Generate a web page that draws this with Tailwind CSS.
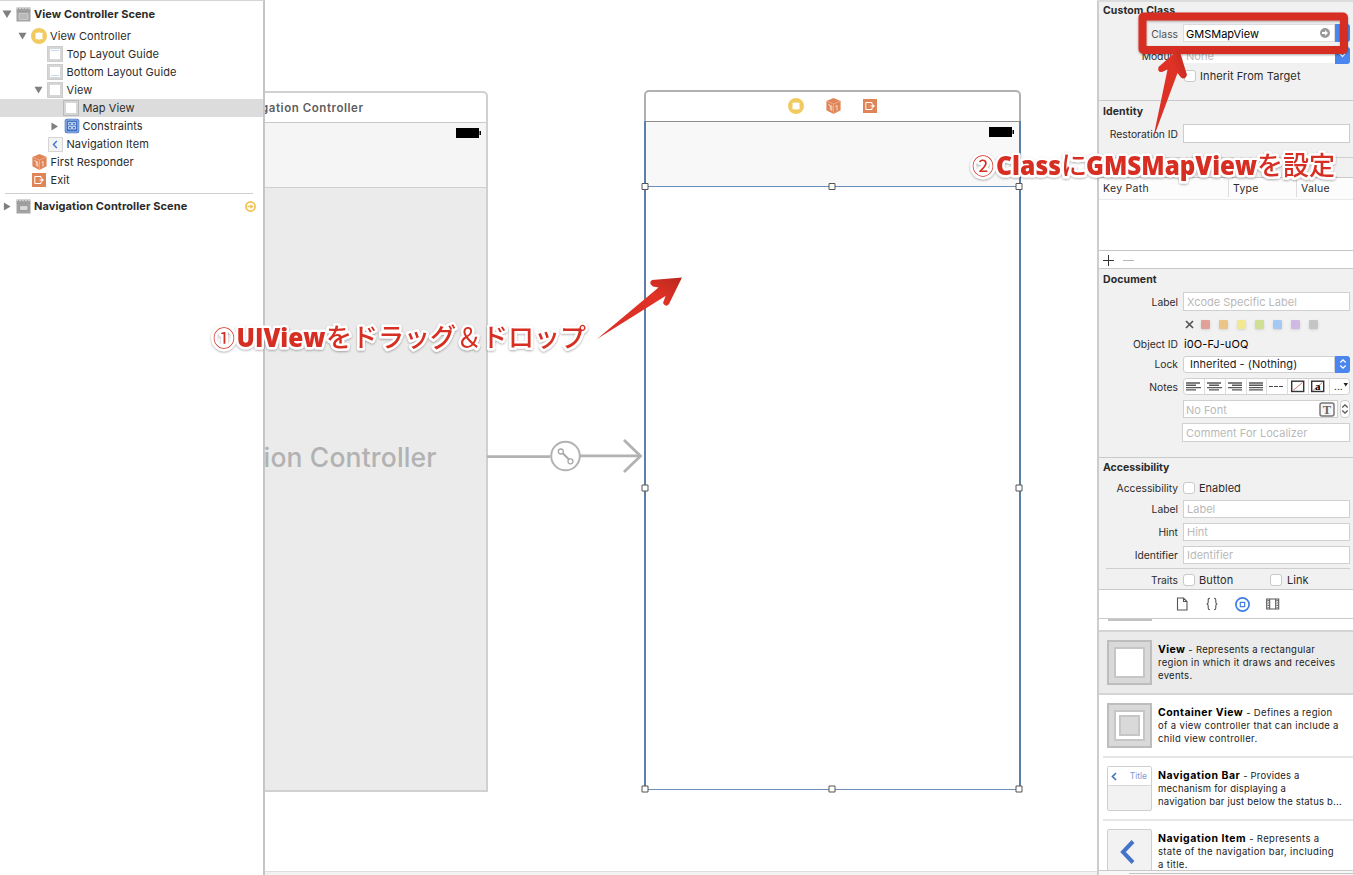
<!DOCTYPE html>
<html lang="ja">
<head>
<meta charset="utf-8">
<title>Interface Builder</title>
<script src="https://cdn.jsdelivr.net/npm/@tailwindcss/browser@4"></script>
</head>
<body class="relative flex h-[875px] w-[1353px] overflow-hidden bg-white font-['Inter','Noto_Sans_CJK_JP',sans-serif] text-[11px] text-[#2b2b2b]">
<svg class="hidden">
  <symbol id="down" viewBox="0 0 10 8"><path d="M0.5 0.5h9L5 8z" fill="#808080"/></symbol>
  <symbol id="right" viewBox="0 0 8 10"><path d="M0.5 0.5v9L8 5z" fill="#808080"/></symbol>
  <symbol id="vc" viewBox="0 0 16 16"><circle cx="8" cy="8" r="8" fill="#f2cb60"/><path d="M4.500 4.500l1.300.6 1.100-.6h2.200l1.100.6 1.300-.6v7l-1.300-.6-1.100.6H6.900l-1.100-.6-1.300.6z" fill="#fff"/></symbol>
  <symbol id="cube" viewBox="0 0 15 16"><path d="M7.500 0L14.600 3v9.300L7.500 16 .4 12.300V3z" fill="#e08558"/><path d="M.8 3.200L7.500 6l6.700-2.800M7.500 6v9.500" fill="none" stroke="#efb398" stroke-width=".8"/><path d="M2.300 6.500l2 .9v4.500M4.500 7.500l1.300.6v4.800M9.500 8.500l1.500-1v5" fill="none" stroke="#fbe5da" stroke-width=".9"/></symbol>
  <symbol id="exit" viewBox="0 0 14 14"><path d="M0 0h14v14H0z" fill="#e08558"/><path d="M9 5.200V3.500H2.800v7H9V8.800" fill="none" stroke="#fff" stroke-width="1"/><path d="M7.500 7H10" stroke="#fff"/><path d="M9.300 4.800L12 7 9.300 9.200z" fill="#fff"/></symbol>
  <symbol id="clap" viewBox="0 0 15 15"><path d="M.5.5h14v14H.5z" fill="#a3a3a3"/><path d="M1 2l1.500-1.500L4 2l1.500-1.500L7 2 8.500.5 10 2 11.500.5 13 2 14.300.5" fill="none" stroke="#ddd" stroke-width=".8"/><path d="M.5 4.200h14" stroke="#8d8d8d" stroke-width=".6"/></symbol>
  <symbol id="box" viewBox="0 0 16 16"><path d="M0 0h16v16H0z" fill="#d6d6d6"/><path d="M.5.5h15v15H.5z" fill="none" stroke="#cdcdcd"/><path d="M3 3h10v10H3z" fill="#fff"/></symbol>
  <symbol id="updown" viewBox="0 0 8 12"><path d="M1.300 4.500L4 1.800l2.700 2.700M1.300 7.500L4 10.200l2.700-2.700" fill="none" stroke="currentColor" stroke-width="1.300"/></symbol>
</svg>

<!-- Document outline -->
<aside class="flex h-full w-[265px] shrink-0 flex-col border-t border-r-2 border-t-[#d5d5d5] border-r-[#c6c6c6] text-[11px] tracking-[0.08px] whitespace-nowrap">
  <div class="mt-[4px] flex h-[18px] items-center pl-[2px] font-bold tracking-[0.08px]"><svg class="h-[8px] w-[10px]"><use href="#down"/></svg><span class="ml-[4px] size-[15px]"><svg class="size-[15px]"><use href="#clap"/><path d="M3 6.500h9v6H3z" fill="#b9b9b9" stroke="#d5d5d5" stroke-width=".7"/></svg></span><span class="ml-[3px]">View Controller Scene</span></div>
  <div class="mt-[4px] flex h-[18px] items-center pl-[18px]"><svg class="h-[8px] w-[9px]"><use href="#down"/></svg><svg class="ml-[4px] size-[16px]"><use href="#vc"/></svg><span class="ml-[3px]">View Controller</span></div>
  <div class="flex h-[18px] items-center pl-[47px]"><svg class="size-[16px]"><use href="#box"/><path d="M4 4.500h8" stroke="#c3daf6"/></svg><span class="ml-[3.500px]">Top Layout Guide</span></div>
  <div class="flex h-[18px] items-center pl-[47px]"><svg class="size-[16px]"><use href="#box"/><path d="M4 11.500h8" stroke="#c3daf6"/></svg><span class="ml-[3.500px]">Bottom Layout Guide</span></div>
  <div class="flex h-[18px] items-center pl-[34px]"><svg class="h-[8px] w-[9px]"><use href="#down"/></svg><svg class="ml-[4px] size-[16px]"><use href="#box"/></svg><span class="ml-[3.500px]">View</span></div>
  <div class="flex h-[18px] items-center bg-[#dcdcdc] pl-[63px]"><svg class="size-[16px]"><use href="#box"/><path d="M.5.5h15v15H.5z" fill="none" stroke="#b9b9b9"/></svg><span class="ml-[3.500px]">Map View</span></div>
  <div class="flex h-[18px] items-center pl-[51px]"><svg class="h-[9px] w-[7px]"><use href="#right"/></svg><svg class="ml-[6px] size-[16px]" viewBox="0 0 16 16"><rect x=".7" y=".7" width="14.600" height="14.600" rx="2.500" fill="#4474c4"/><rect x="2" y="2" width="12" height="12" rx="1.500" fill="#4474c4" stroke="#b4caee" stroke-width=".9"/><path d="M4.500 4.500h3v2.500h-3zM8.500 4.500h3v2.500h-3zM4.500 8.500h3v2.500h-3zM8.500 8.500h3v2.500h-3z" fill="none" stroke="#d9e5f8" stroke-width=".8"/></svg><span class="ml-[2.500px]">Constraints</span></div>
  <div class="flex h-[18px] items-center pl-[48px]"><svg class="size-[15px]" viewBox="0 0 15 15"><path d="M.5.500h14v14H.5z" fill="#f3f3f3" stroke="#d4d4d4"/><path d="M8.800 4L5.500 7.500 8.800 11" fill="none" stroke="#3f74d1" stroke-width="1.400"/></svg><span class="ml-[3.500px]">Navigation Item</span></div>
  <div class="flex h-[18px] items-center pl-[32px]"><svg class="h-[16px] w-[15px]"><use href="#cube"/></svg><span class="ml-[3.500px]">First Responder</span></div>
  <div class="flex h-[18px] items-center pl-[32px]"><svg class="size-[14px]"><use href="#exit"/></svg><span class="ml-[4.500px]">Exit</span></div>
  <div class="mt-[4px] mr-[10px] ml-[5px] h-px bg-[#cfcfcf]"></div>
  <div class="mt-[3px] flex h-[18px] items-center pl-[3px] font-bold tracking-[0.1px]"><svg class="h-[9px] w-[8px]"><use href="#right"/></svg><svg class="ml-[5px] size-[15px]"><use href="#clap"/><rect x="3.500" y="6.500" width="8.500" height="5" rx="1.500" fill="#d8d8d8" stroke="#8c8c8c" stroke-width=".7"/></svg><span class="ml-[3px]">Navigation Controller Scene</span><svg class="mr-[7px] ml-auto size-[11px]" viewBox="0 0 11 11"><circle cx="5.500" cy="5.500" r="4.600" fill="#fff" stroke="#efc34e" stroke-width="1.700"/><path d="M2.500 4.700h3V3L8.500 5.500 5.500 8V6.300h-3z" fill="#efc34e"/></svg></div>
</aside>

<!-- Storyboard canvas: freely placed scenes -->
<main class="relative h-full w-[832px] shrink-0 overflow-hidden bg-white">
  <div class="absolute top-[91px] left-[-160px] h-[701px] w-[383px] rounded-t-[5px] border-2 border-[#d0d0d0] bg-[#ebebeb]">
    <div class="h-[30px] rounded-t-[4px] border-b border-[#c9c9c9] bg-white"></div>
    <div class="flex h-[65px] justify-end border-b border-[#cfcfcf] bg-[#f5f5f5] pt-[5px] pr-[5px]"><svg class="h-[10px] w-[25px]"><path d="M0 0h23v10H0zM23.500 3h1.500v4h-1.500z"/></svg></div>
  </div>
  <svg class="absolute top-0 left-0 h-[875px] w-[832px]" viewBox="265 0 832 875" font-family="Inter, sans-serif">
    <text x="363" y="112" text-anchor="end" font-size="11.500" font-weight="600" fill="#5d5d5d" textLength="129">Navigation Controller</text>
    <text x="436.500" y="466.500" text-anchor="end" font-size="26.500" font-weight="500" fill="#b2b2b2" textLength="271">Navigation Controller</text>
    <path d="M487 456.700H550M580 455.800H640" stroke="#b2b2b2" stroke-width="2.700"/>
    <path d="M624 440l16.500 16L624 472" fill="none" stroke="#b2b2b2" stroke-width="2.800"/>
    <circle cx="565.500" cy="456" r="14.300" fill="#fff" stroke="#b2b2b2" stroke-width="2"/>
    <path d="M562.500 453l6.500 6.500" stroke="#a8a8a8" stroke-width="2"/>
    <g fill="#fff" stroke="#a8a8a8" stroke-width="1.300"><circle cx="560.800" cy="451.500" r="2.500"/><circle cx="570.500" cy="461.300" r="2.500"/></g>
  </svg>
  <div class="absolute top-[90px] left-[379px] h-[40px] w-[377px] rounded-t-[5px] border-2 border-[#b0b0b0] bg-white"></div>
  <div class="absolute top-[121px] left-[379px] h-[669px] w-[377px] border-x-2 border-t border-b border-x-[#5c7fa8] border-t-[#8c8c8c] border-b-[#6d8fb8] bg-white">
    <div class="flex h-[65px] justify-end border-b border-[#6b8fbb] bg-[#f8f8f8] pt-[5px] pr-[5px]"><svg class="h-[10px] w-[25px]"><path d="M0 0h23v10H0zM23.500 3h1.500v4h-1.500z"/></svg></div>
  </div>
  <div class="absolute top-[98px] left-[523px] flex items-center gap-[22px]"><svg class="size-[16px]"><use href="#vc"/></svg><svg class="h-[16px] w-[15px]"><use href="#cube"/></svg><svg class="size-[14px]"><use href="#exit"/></svg></div>
  <svg class="absolute top-0 left-0 h-[875px] w-[832px]" viewBox="265 0 832 875" fill="#fff" stroke="#555" stroke-width="1">
    <path d="M642 183.500h6v6h-6zM829 183.500h6v6h-6zM1016 183.500h6v6h-6zM642 485h6v6h-6zM1016 485h6v6h-6zM642 786h6v6h-6zM829 786h6v6h-6zM1016 786h6v6h-6z"/>
  </svg>
  <div class="absolute inset-x-0 bottom-0 h-[4px] border-t border-[#dedede] bg-[#f2f2f2]"></div>
</main>

<!-- Inspector -->
<aside class="flex h-full w-[256px] shrink-0 flex-col border-t-2 border-l-2 border-t-[#dcdcdc] border-l-[#cdcdcd] bg-[#f1f1f1] text-[10.300px] whitespace-nowrap">
  <section class="h-[99px] border-b border-[#c9c9c9]">
    <h2 class="flex h-[18px] items-center pl-[4px] text-[10.500px] font-bold tracking-[0.1px]">Custom Class</h2>
    <div class="mt-[4px] flex h-[18px] items-center"><span class="w-[79px] pt-[4px] text-right text-[#505050]">Class</span><div class="ml-[5px] flex h-[18px] w-[152px] items-center border border-[#ddd] bg-white pr-[4px] pl-[2px] text-[11px] text-black"><span class="pt-[2px]">GMSMapView</span><svg class="ml-auto size-[10px]" viewBox="0 0 10 10"><circle cx="5" cy="5" r="5" fill="#9a9a9a"/><path d="M2 4h3V2.300L8 5 5 7.700V6H2z" fill="#fff"/></svg></div><div class="h-[18px] w-[15px] rounded-r-[3px] bg-[#4a86ee]"></div></div>
    <div class="mt-[4px] flex h-[18px] items-center"><span class="w-[79px] pt-[4px] text-right">Module</span><div class="ml-[5px] flex h-[15px] w-[152px] items-center bg-white pt-[2px] pl-[3px] text-[11px] text-[#b9b9b9]">None</div><div class="flex h-[17px] w-[15px] items-center justify-center rounded-r-[3px] bg-[#4a86ee]"><svg class="size-[7px]" viewBox="0 0 8 8"><path d="M1 2l3 3 3-3" fill="none" stroke="#fff" stroke-width="1.400"/></svg></div></div>
    <div class="mt-[3px] flex h-[18px] items-center pl-[85px]"><span class="size-[12px] rounded-[3px] border border-[#c9c9c9] bg-white"></span><span class="ml-[4px] text-[11px] tracking-[0.1px]">Inherit From Target</span></div>
  </section>
  <section class="h-[57px] border-b border-[#cfcfcf]">
    <h2 class="flex h-[20px] items-center pl-[4px] pt-[1px] text-[10.500px] font-bold tracking-[0.1px]">Identity</h2>
    <div class="mt-[3px] flex h-[19px] items-center"><span class="w-[79px] pt-[3px] text-right">Restoration ID</span><span class="ml-[5px] h-[19px] w-[167px] border border-[#cdcdcd] bg-white"></span></div>
  </section>
  <section class="h-[20px] border-b border-[#c9c9c9]"></section>
  <section class="h-[91px] border-b border-[#c9c9c9] bg-white">
    <div class="flex h-[22px] items-center border-b border-[#eaeaea] bg-[#fcfcfc] text-[10.500px] tracking-[0.3px]"><span class="h-[17px] w-[129px] pt-[1px] pl-[4px]">Key Path</span><span class="h-[17px] w-[68px] border-l border-[#ddd] pt-[1px] pl-[4px]">Type</span><span class="h-[17px] border-l border-[#ddd] pt-[1px] pl-[4px]">Value</span></div>
    <div class="h-[51px] border-b border-[#c4c4c4]"></div>
    <svg class="h-[17px] w-[60px]" viewBox="0 0 60 17"><path d="M4 9.500h11M9.500 4v11" stroke="#333"/><path d="M24 9.500h11" stroke="#b5b5b5"/></svg>
  </section>
  <section class="h-[189px] border-b border-[#c9c9c9]">
    <h2 class="flex h-[20px] items-center pt-[1px] pl-[4px] text-[10.500px] font-bold tracking-[0.1px]">Document</h2>
    <div class="mt-[3px] flex h-[19px] items-center"><span class="w-[79px] pt-[3px] text-right">Label</span><span class="ml-[5px] flex h-[19px] w-[167px] items-center border border-[#d0d0d0] bg-white pt-[1px] pl-[3px] text-[11px] text-[#b9b9b9]">Xcode Specific Label</span></div>
    <div class="mt-[8px] flex h-[10px] items-center pl-[86px]"><svg class="size-[9px]" viewBox="0 0 9 9"><path d="M1 1l7 7M8 1L1 8" stroke="#555" stroke-width="1.700"/></svg>
      <div class="ml-[7px] flex gap-[9px]"><i class="size-[9px] rounded-[1px] bg-[#e3a098] shadow-sm"></i><i class="size-[9px] rounded-[1px] bg-[#ebc588] shadow-sm"></i><i class="size-[9px] rounded-[1px] bg-[#f3e892] shadow-sm"></i><i class="size-[9px] rounded-[1px] bg-[#cfdf93] shadow-sm"></i><i class="size-[9px] rounded-[1px] bg-[#a4c9f3] shadow-sm"></i><i class="size-[9px] rounded-[1px] bg-[#d0b9e3] shadow-sm"></i><i class="size-[9px] rounded-[1px] bg-[#c5c5c5] shadow-sm"></i></div></div>
    <div class="mt-[6px] flex h-[18px] items-center pt-[1px]"><span class="w-[79px] text-right">Object ID</span><span class="ml-[6px] text-[11px] tracking-[0.1px] text-black">i0O-FJ-uOQ</span></div>
    <div class="mt-[2px] flex h-[18px] items-center"><span class="w-[79px] pt-[1px] text-right">Lock</span><span class="ml-[5px] flex h-[17px] w-[152px] items-center rounded-l-[3px] border border-[#d0d0d0] bg-white pl-[6px] text-[11px] tracking-[0.05px] text-[#222]">Inherited - (Nothing)</span><span class="flex h-[17px] w-[15px] items-center justify-center rounded-r-[3px] bg-[#4a86ee] text-white"><svg class="h-[12px] w-[8px]"><use href="#updown"/></svg></span></div>
    <div class="mt-[4px] flex h-[18px] items-center"><span class="w-[79px] pt-[4px] text-right">Notes</span>
      <svg class="ml-[5px] h-[17px] w-[167px]" viewBox="0 0 167 17"><rect x=".5" y=".5" width="166" height="16" rx="3" fill="#fff" stroke="#d0d0d0"/><path d="M21.500 1v15M42.500 1v15M63.500 1v15M83.500 1v15M104.500 1v15M125.500 1v15M146.500 1v15" stroke="#dcdcdc"/>
        <path d="M3 5h14M3 7.300h10M3 9.600h15M3 11.900h10M24 5h14M26 7.300h10M24 9.600h15M26 11.900h10M45 5h14M49 7.300h10M45 9.600h14M49 11.900h10M66 5h14M66 7.300h14M66 9.600h14M66 11.900h14" stroke="#585858" stroke-width="1.400"/><path d="M86 8.500h4M91 8.500h4M96 8.500h4" stroke="#484848" stroke-width="1.200"/>
        <rect x="108.700" y="3.200" width="12" height="10.300" fill="#fff" stroke="#333" stroke-width="1.400"/><path d="M110 12.500l9.500-8" stroke="#e08070"/><rect x="128.700" y="3.200" width="12" height="10.300" fill="#fff" stroke="#333" stroke-width="1.400"/><path d="M130 12.500l9.500-8" stroke="#e08070"/><text x="132" y="11.800" font-family="Liberation Serif" font-weight="700" font-size="11">a</text><text x="151" y="11.500" font-size="10">...</text><path d="M160.500 5h4.500l-2.200 3.500z" fill="#222"/></svg></div>
    <div class="mt-[5px] flex h-[18px] items-center pl-[84px]"><span class="flex h-[18px] w-[155px] items-center border border-[#d0d0d0] bg-white pr-[2px] pl-[2px] text-[11px] text-[#b9b9b9]"><span class="pt-[2px]">No Font</span><svg class="ml-auto h-[15px] w-[16px]" viewBox="0 0 16 15"><rect x="1" y="1" width="14" height="13" rx="2" fill="#f6f6f6" stroke="#777" stroke-width="1.500"/><text x="8" y="12" text-anchor="middle" font-family="Liberation Serif" font-weight="700" font-size="12.500" fill="#666">T</text></svg></span><span class="ml-[2px] flex h-[18px] w-[10px] items-center justify-center rounded-[4px] border border-[#cfcfcf] bg-white text-[#555]"><svg class="h-[12px] w-[8px] shrink-0"><use href="#updown"/></svg></span></div>
    <div class="mt-[4px] flex h-[20px] items-center pl-[83px]"><span class="flex h-[19px] w-[168px] items-center border border-[#d0d0d0] bg-white pt-[2px] pl-[3px] text-[11px] tracking-[0.04px] text-[#b9b9b9]">Comment For Localizer</span></div>
  </section>
  <section class="h-[132px] border-b border-[#c9c9c9]">
    <h2 class="flex h-[19px] items-center pt-[1px] pl-[4px] text-[10.500px] font-bold">Accessibility</h2>
    <div class="mt-[2px] flex h-[18px] items-center"><span class="w-[79px] pt-[2px] text-right">Accessibility</span><span class="ml-[5px] size-[12px] rounded-[3px] border border-[#c9c9c9] bg-white"></span><span class="ml-[4px] text-[11px]">Enabled</span></div>
    <div class="mt-[3px] flex h-[18px] items-center"><span class="w-[79px] pt-[2px] text-right">Label</span><span class="ml-[5px] flex h-[18px] w-[167px] items-center border border-[#d0d0d0] bg-white pt-[1px] pl-[3px] text-[11px] text-[#b9b9b9]">Label</span></div>
    <div class="mt-[5px] flex h-[18px] items-center"><span class="w-[79px] pt-[2px] text-right">Hint</span><span class="ml-[5px] flex h-[18px] w-[167px] items-center border border-[#d0d0d0] bg-white pt-[1px] pl-[3px] text-[11px] text-[#b9b9b9]">Hint</span></div>
    <div class="mt-[5px] flex h-[18px] items-center"><span class="w-[79px] pt-[2px] text-right">Identifier</span><span class="ml-[5px] flex h-[18px] w-[167px] items-center border border-[#d0d0d0] bg-white pt-[1px] pl-[3px] text-[11px] text-[#b9b9b9]">Identifier</span></div>
    <div class="mt-[4px] mr-[3px] ml-[7px] h-px bg-[#cfcfcf]"></div>
    <div class="mt-[2px] flex h-[18px] items-center"><span class="w-[79px] pt-[1px] text-right">Traits</span><span class="ml-[5px] size-[12px] rounded-[3px] border border-[#c9c9c9] bg-white"></span><span class="ml-[4px] w-[71px] pt-[1px] text-[11px] tracking-[0.15px]">Button</span><span class="size-[12px] rounded-[3px] border border-[#c9c9c9] bg-white"></span><span class="ml-[5px] pt-[1px] text-[11px]">Link</span></div>
  </section>
  <nav class="flex h-[29px] shrink-0 items-center gap-[16px] border-b border-[#c9c9c9] bg-white pl-[76px]">
    <svg class="size-[14px]" viewBox="0 0 14 14"><path d="M2.500 1h6l3.500 3.500v8.500h-9.500zM8.500 1v3.500h3.500" fill="none" stroke="#555" stroke-width="1.100"/></svg>
    <svg class="size-[14px]" viewBox="0 0 14 14"><path d="M5 1.200c-1.600 0-1.800.6-1.800 1.800v2.300c0 1-.5 1.500-1.400 1.700.9.200 1.400.7 1.400 1.700V11c0 1.200.2 1.800 1.800 1.800M9 1.200c1.600 0 1.800.6 1.800 1.800v2.300c0 1 .5 1.500 1.400 1.700-.9.200-1.400.7-1.400 1.700V11c0 1.200-.2 1.800-1.800 1.800" fill="none" stroke="#555" stroke-width="1.100"/></svg>
    <svg class="size-[15px]" viewBox="0 0 15 15"><circle cx="7.500" cy="7.500" r="6.600" fill="#fff" stroke="#3f7ee8" stroke-width="1.700"/><path d="M5.300 5.300h4.400v4.400H5.300z" fill="none" stroke="#3f7ee8" stroke-width="1.200"/></svg>
    <svg class="size-[14px]" viewBox="0 0 14 14"><path d="M.7 2h12v10H.7zM3.700 2v10M9.700 2v10" fill="none" stroke="#555" stroke-width="1.100"/><path d="M2.200 3v8M11.200 3v8" stroke="#555" stroke-width="1.300" stroke-dasharray="1.200 1.200"/></svg>
  </nav>
  <div class="flex h-[252px] shrink-0 flex-col overflow-hidden border-b border-[#c9c9c9] bg-white text-[9.500px] leading-[13px] tracking-[0.29px] text-[#222]">
    <div class="h-[13px] shrink-0 border-b-2 border-[#d4d4d4] pl-[9px]"><div class="h-[2px] w-[44px] bg-[#c2c2c2]"></div></div>
    <div class="flex h-[63px] shrink-0 border-b-2 border-[#d4d4d4] bg-[#ebebeb] pt-[8px] pl-[8px]"><span class="flex size-[45px] items-center justify-center border-2 border-[#bdbdbd] bg-[#d9d9d9]"><i class="size-[31px] border-2 border-[#c6c6c6] bg-white"></i></span><p class="ml-[6px] pt-[3px]"><b class="text-[10.500px] tracking-[0.4px] text-black">View</b> - Represents a rectangular<br>region in which it draws and receives<br>events.</p></div>
    <div class="ml-[4px] flex h-[63px] shrink-0 border-b-2 border-[#e6e6e6] pt-[8px] pl-[4px]"><span class="flex size-[45px] items-center justify-center border-2 border-[#bdbdbd] bg-[#d9d9d9]"><i class="flex size-[31px] items-center justify-center border-2 border-[#c6c6c6] bg-white"><i class="size-[21px] border-2 border-[#c6c6c6] bg-[#d9d9d9]"></i></i></span><p class="ml-[6px] pt-[3px] tracking-[0.32px]"><b class="text-[10.500px] tracking-[0.45px] text-black">Container View</b> - Defines a region<br>of a view controller that can include a<br>child view controller.</p></div>
    <div class="ml-[4px] flex h-[63px] shrink-0 border-b-2 border-[#e6e6e6] pt-[8px] pl-[4px]"><span class="size-[45px] rounded-[2px] border border-[#cfcfcf] bg-[#f2f2f2]"><span class="flex h-[19px] items-center justify-between border-b border-[#d8d8d8] bg-white pr-[4px] pl-[3px] text-[8.500px] tracking-normal text-[#7f9bd6]"><svg class="h-[9px] w-[6px]" viewBox="0 0 6 9"><path d="M5 1L1.500 4.500 5 8" fill="none" stroke="#4474c8" stroke-width="1.700"/></svg>Title</span></span><p class="ml-[6px] pt-[3px] tracking-[0.2px]"><b class="text-[10.500px] tracking-[0.5px] text-black">Navigation Bar</b> - Provides a<br>mechanism for displaying a<br>navigation bar just below the status b...</p></div>
    <div class="ml-[4px] flex h-[63px] shrink-0 pt-[8px] pl-[4px]"><span class="flex size-[45px] items-center justify-center rounded-[2px] border border-[#cfcfcf] bg-[#f2f2f2] pr-[3px]"><svg class="h-[24px] w-[16px]" viewBox="0 0 16 24"><path d="M13 1.500L3 12l10 10.500" fill="none" stroke="#4474c8" stroke-width="4"/></svg></span><p class="ml-[6px] pt-[3px] tracking-[0.34px]"><b class="text-[10.500px] tracking-[0.5px] text-black">Navigation Item</b> - Represents a<br>state of the navigation bar, including<br>a title.</p></div>
  </div>
  <div class="flex-1 bg-[#f8f8f8] pt-[2px] pl-[30px]"><div class="h-px bg-[#c4c4c4]"></div></div>
</aside>

<!-- Step annotations -->
<svg class="pointer-events-none absolute top-0 left-0 h-[875px] w-[1353px]" viewBox="0 0 1353 875">
  <defs>
    <linearGradient id="g" x1="0" y1="1" x2="1" y2="0"><stop offset="0" stop-color="#d93025"/><stop offset=".7" stop-color="#e03226"/><stop offset="1" stop-color="#b9281d"/></linearGradient>
    <filter id="s" x="-10%" y="-30%" width="120%" height="170%"><feDropShadow dx="0" dy="1" stdDeviation="1.200" flood-color="#000" flood-opacity=".35"/></filter>
  </defs>
  <g filter="url(#s)">
    <rect x="1142.500" y="16.500" width="201.500" height="33.500" rx="1" fill="none" stroke="#d62f23" stroke-width="8" stroke-linejoin="round"/>
  </g>
  <path d="M1153 139L1167.500 69.500 1162 72Q1157 72.500 1158.500 67L1179 49 1187 75Q1184.500 81 1180.500 77L1177.500 73z" fill="url(#g)"/>
  <path d="M597 339L658.500 287.500 653 286.500Q648 283 652 280L682 277.500 669 304Q666 308 663 303L665.500 296z" fill="url(#g)"/>
  <g filter="url(#s)" fill="#d62f23" stroke="#fff" stroke-width="5" stroke-linejoin="round" paint-order="stroke" font-size="26" font-family="'Noto Sans CJK JP', sans-serif">
    <text x="213" y="346" font-size="22">①</text>
    <text y="347" font-weight="500"><tspan x="326">を</tspan><tspan x="352">ドラッグ</tspan><tspan x="456" font-weight="400">＆</tspan><tspan x="482">ドロップ</tspan></text>
    <text x="236.500" y="347" font-family="Open Sans" font-weight="800" textLength="89" lengthAdjust="spacingAndGlyphs">UIView</text>
    <text x="972" y="173.500" font-size="22">②</text>
    <text x="1061" y="174.500" font-weight="500">に</text>
    <text x="1257" y="174.500" font-weight="500">を設定</text>
    <text x="996" y="174.500" font-family="Open Sans" font-weight="800" textLength="65" lengthAdjust="spacingAndGlyphs">Class</text>
    <text x="1086" y="174.500" font-family="Open Sans" font-weight="800" textLength="171" lengthAdjust="spacingAndGlyphs">GMSMapView</text>
  </g>
</svg>
</body>
</html>
